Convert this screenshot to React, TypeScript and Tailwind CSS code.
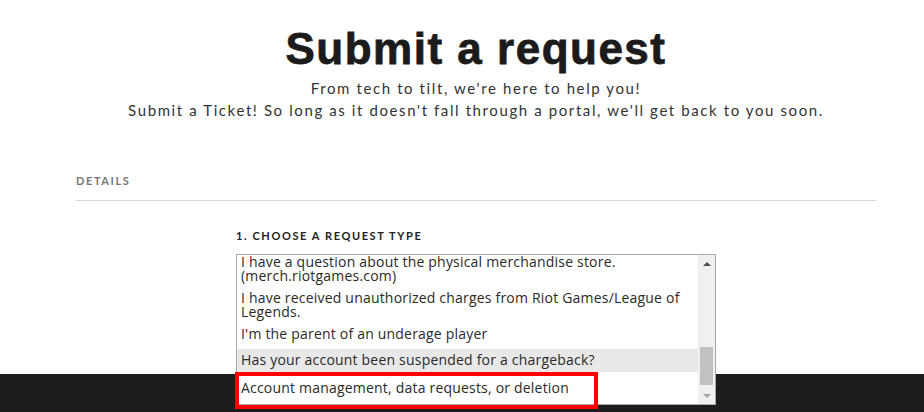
const options = [
  { lines: ["I have a question about the physical merchandise store.", "(merch.riotgames.com)"], pad: "pt-[4px] pb-[4px]" },
  { lines: ["I have received unauthorized charges from Riot Games/League of", "Legends."], pad: "pt-[4px] pb-[4px]" },
  { lines: ["I'm the parent of an underage player"], pad: "pt-[4px] pb-[8px]" },
  { lines: ["Has your account been suspended for a chargeback?"], pad: "pt-[4px] pb-[5px] bg-[#e8e8e8]" },
  { lines: ["Account management, data requests, or deletion"], pad: "pt-[9px] pb-[9px]" },
];

export default function App() {
  return (
    <div className="w-full min-h-[412px] bg-white overflow-hidden">
      <section className="h-[374px] pl-[28px]">
        <div className="text-center pt-[24px]">
          <h1 className="text-[44px] leading-[50px] font-bold tracking-[1.5px] text-[#1b1b1b] [-webkit-text-stroke:0.8px_#1b1b1b] font-['Liberation_Sans',Arial,sans-serif]">
            Submit a request
          </h1>
          <p className="mt-[3px] text-[15px] leading-[22px] tracking-[1.6px] text-[#333] font-['Lato',sans-serif]">
            From tech to tilt, we're here to help you!
            <br />
            Submit a Ticket! So long as it doesn't fall through a portal, we'll get back to you soon.
          </p>
        </div>

        <div className="w-[800px] mx-auto mt-[53px]">
          <div className="text-[11px] leading-[14px] font-bold tracking-[1.6px] text-[#777] font-['Lato',sans-serif]">
            DETAILS
          </div>
          <div className="mt-[12px] border-t border-[#d4d4d4]" />

          <div className="w-[480px] mx-auto mt-[28px]">
            <div className="text-[11px] leading-[14px] font-bold tracking-[1.6px] text-[#222] font-['Lato',sans-serif]">
              1. CHOOSE A REQUEST TYPE
            </div>
            <div className="relative z-10 mt-[11px] h-[151px] border border-[#a9a9a9] bg-white flex">
              <div className="flex-1 overflow-hidden">
                <ul className="-mt-[4px] text-[14px] leading-[14px] tracking-[0.2px] text-[#2a2a2a] font-['Open_Sans',sans-serif]">
                  {options.map((o, i) => (
                    <li key={i} className={`px-[4px] ${o.pad}`}>
                      {o.lines.map((l) => (
                        <div key={l} className="h-[14px] whitespace-nowrap">{l}</div>
                      ))}
                    </li>
                  ))}
                </ul>
              </div>
              <div className="w-[17px] bg-[#f0f0f0] flex flex-col items-center">
                <div className="h-[17px] flex items-center justify-center">
                  <div className="w-0 h-0 border-l-[4px] border-r-[4px] border-b-[4px] border-l-transparent border-r-transparent border-b-[#505050]" />
                </div>
                <div className="flex-1 w-full px-[2px] flex flex-col justify-end">
                  <div className="h-[38px] bg-[#c1c1c1] mb-[2px]" />
                </div>
                <div className="h-[17px] flex items-center justify-center">
                  <div className="w-0 h-0 border-l-[4px] border-r-[4px] border-t-[4px] border-l-transparent border-r-transparent border-t-[#a3a3a3]" />
                </div>
              </div>
              <div className="absolute left-[-2px] top-[117px] w-[363px] h-[37px] border-[4px] border-[#ff0000]" />
            </div>
          </div>
        </div>
      </section>
      <footer className="h-[38px] bg-[#1c1c1c]" />
    </div>
  );
}
